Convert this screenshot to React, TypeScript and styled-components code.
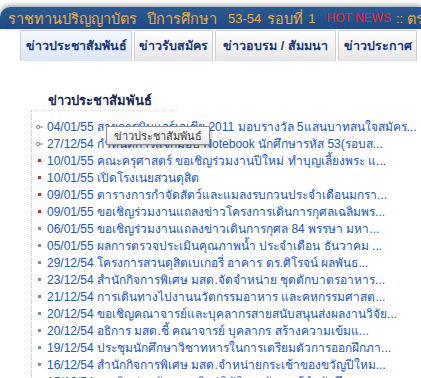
import React from 'react';
import styled, { createGlobalStyle } from 'styled-components';

const GlobalStyle = createGlobalStyle`
  html, body {
    margin: 0;
    padding: 0;
    background: #ffffff;
    overflow: hidden;
  }
  body {
    font-family: Tahoma, "Liberation Sans", "Noto Sans", "DejaVu Sans", sans-serif;
  }
`;

const Page = styled.div`
  width: 421px;
  height: 378px;
  padding-top: 7px;
  box-sizing: border-box;
  position: relative;
  overflow: hidden;
`;

const TopBar = styled.div`
  height: 22px;
  background: linear-gradient(#2a5a94, #1d4b84);
  border-top-left-radius: 10px;
  box-shadow: 0 -2px 5px rgba(0, 0, 0, 0.35);
  display: flex;
  align-items: center;
  padding-left: 8px;
  white-space: nowrap;
  overflow: hidden;
  color: #f2a93a;
`;

const BarWord = styled.span<{ $hot?: boolean; $latin?: boolean; $gap?: number }>`
  margin-right: ${(p) => p.$gap ?? 10}px;
  color: ${(p) => (p.$hot ? '#ff1a1a' : '#f2a93a')};
  font-family: ${(p) => (p.$hot || p.$latin ? '"Liberation Sans", Arial, sans-serif' : 'inherit')};
  font-size: ${(p) => (p.$hot ? 12 : p.$latin ? 13 : 14.5)}px;
`;

const Tabs = styled.div`
  display: flex;
  gap: 2px;
  padding-left: 20px;
  margin-top: 1px;
`;

const Tab = styled.div<{ $active?: boolean; $w: number }>`
  width: ${(p) => p.$w}px;
  height: 31px;
  box-sizing: border-box;
  display: flex;
  align-items: center;
  justify-content: center;
  border: 1px solid #cfcfcf;
  border-bottom: none;
  border-radius: 2px 2px 0 0;
  background: ${(p) =>
    p.$active
      ? 'linear-gradient(#f4f8fd, #dbe7f6)'
      : 'linear-gradient(#ffffff, #e6e6e6)'};
  font-size: 12.5px;
  font-weight: bold;
  color: #1b3a78;
  white-space: nowrap;
`;

const Heading = styled.div`
  margin: 29px 0 0 48px;
  height: 20px;
  font-size: 13px;
  font-weight: bold;
  color: #1c2850;
`;

const ListBox = styled.div`
  position: relative;
  margin-left: 31px;
  padding: 8px 0 0 4px;
  border-left: 1px dotted #c9c9c9;
  &::before {
    content: '';
    position: absolute;
    left: 0;
    top: 0;
    width: 145px;
    border-top: 1px dotted #e2e2e2;
  }
`;

const Row = styled.div`
  height: 17px;
  display: flex;
  align-items: center;
  gap: 4px;
  white-space: nowrap;
  font-family: "Liberation Sans", Tahoma, "Noto Sans", sans-serif;
  font-size: 12px;
  color: #2157c8;
`;

const BulletSlot = styled.span`
  width: 7px;
  display: flex;
  justify-content: center;
  align-items: center;
`;

const Dot = styled.span<{ $red?: boolean }>`
  width: 3px;
  height: 3px;
  background: ${(p) => (p.$red ? '#d8262a' : '#7d8ea8')};
`;

const Tooltip = styled.div`
  position: absolute;
  left: 106px;
  top: 126px;
  height: 19px;
  padding: 0 7px;
  display: flex;
  align-items: center;
  box-sizing: border-box;
  border: 1px solid #8f8f8f;
  background: linear-gradient(#ffffff, #e9e9e9);
  box-shadow: 1px 2px 3px rgba(0, 0, 0, 0.3);
  font-size: 11px;
  color: #3a3a3a;
  white-space: nowrap;
`;

type Kind = 'icon' | 'red' | 'gray';

const tabs = [
  { label: 'ข่าวประชาสัมพันธ์', w: 112, active: true },
  { label: 'ข่าวรับสมัคร', w: 79 },
  { label: 'ข่าวอบรม / สัมมนา', w: 121 },
  { label: 'ข่าวประกาศ', w: 79 },
];

const news: { kind: Kind; text: string }[] = [
  { kind: 'icon', text: '04/01/55 สายการบินแอร์เอเชีย 2011 มอบรางวัล 5แสนบาทสนใจสมัคร...' },
  { kind: 'icon', text: '27/12/54 กำหนดการแจกมอบ Notebook นักศึกษารหัส 53(รอบส...' },
  { kind: 'red', text: '10/01/55 คณะครุศาสตร์ ขอเชิญร่วมงานปีใหม่ ทำบุญเลี้ยงพระ แ...' },
  { kind: 'red', text: '10/01/55 เปิดโรงเนยสวนดุสิต' },
  { kind: 'red', text: '09/01/55 ตารางการกำจัดสัตว์และแมลงรบกวนประจำเดือนมกรา...' },
  { kind: 'red', text: '09/01/55 ขอเชิญร่วมงานแถลงข่าวโครงการเดินการกุศลเฉลิมพร...' },
  { kind: 'gray', text: '06/01/55 ขอเชิญร่วมงานแถลงข่าวเดินการกุศล 84 พรรษา มหา...' },
  { kind: 'gray', text: '05/01/55 ผลการตรวจประเมินคุณภาพน้ำ ประจำเดือน ธันวาคม ...' },
  { kind: 'gray', text: '29/12/54 โครงการสวนดุสิตเบเกอรี่ อาคาร ดร.ศิโรจน์ ผลพันธ...' },
  { kind: 'gray', text: '23/12/54 สำนักกิจการพิเศษ มสด.จัดจำหน่าย ชุดตักบาตรอาหาร...' },
  { kind: 'gray', text: '21/12/54 การเดินทางไปงานนวัตกรรมอาหาร และคหกรรมศาสต...' },
  { kind: 'gray', text: '20/12/54 ขอเชิญคณาจารย์และบุคลากรสายสนับสนุนส่งผลงานวิจัย...' },
  { kind: 'gray', text: '20/12/54 อธิการ มสด.ชี้ คณาจารย์ บุคลากร สร้างความเข้มแ...' },
  { kind: 'gray', text: '19/12/54 ประชุมนักศึกษาวิชาทหารในการเตรียมตัวการออกฝึกภา...' },
  { kind: 'gray', text: '16/12/54 สำนักกิจการพิเศษ มสด.จำหน่ายกระเช้าของขวัญปีใหม...' },
  { kind: 'gray', text: '15/12/54 ขอเชิญร่วมสัมมนาเชิงปฏิบัติการพัฒนาผู้นำนักศึกษา...' },
];

const KeyIcon = () => (
  <svg width="8" height="6" viewBox="0 0 8 6">
    <circle cx="2.5" cy="3" r="1.8" fill="none" stroke="#7b8594" strokeWidth="1.2" />
    <line x1="4.3" y1="3" x2="8" y2="3" stroke="#7b8594" strokeWidth="1.2" />
  </svg>
);

const Bullet = ({ kind }: { kind: Kind }) => (
  <BulletSlot>{kind === 'icon' ? <KeyIcon /> : <Dot $red={kind === 'red'} />}</BulletSlot>
);

export default function App() {
  return (
    <Page>
      <GlobalStyle />
      <TopBar>
        <BarWord $gap={10}>ราชทานปริญญาบัตร</BarWord>
        <BarWord $gap={11}>ปีการศึกษา</BarWord>
        <BarWord $latin $gap={6}>53-54</BarWord>
        <BarWord $gap={5}>รอบที่</BarWord>
        <BarWord $latin $gap={11}>1</BarWord>
        <BarWord $hot $gap={5}>HOT NEWS</BarWord>
        <BarWord $latin $gap={4}>::</BarWord>
        <BarWord>ตรวจสอบรายชื่อบัณฑิต</BarWord>
      </TopBar>
      <Tabs>
        {tabs.map((t) => (
          <Tab key={t.label} $w={t.w} $active={t.active}>
            {t.label}
          </Tab>
        ))}
      </Tabs>
      <Heading>ข่าวประชาสัมพันธ์</Heading>
      <ListBox>
        {news.map((n, i) => (
          <Row key={i}>
            <Bullet kind={n.kind} />
            {n.text}
          </Row>
        ))}
      </ListBox>
      <Tooltip>ข่าวประชาสัมพันธ์</Tooltip>
    </Page>
  );
}
